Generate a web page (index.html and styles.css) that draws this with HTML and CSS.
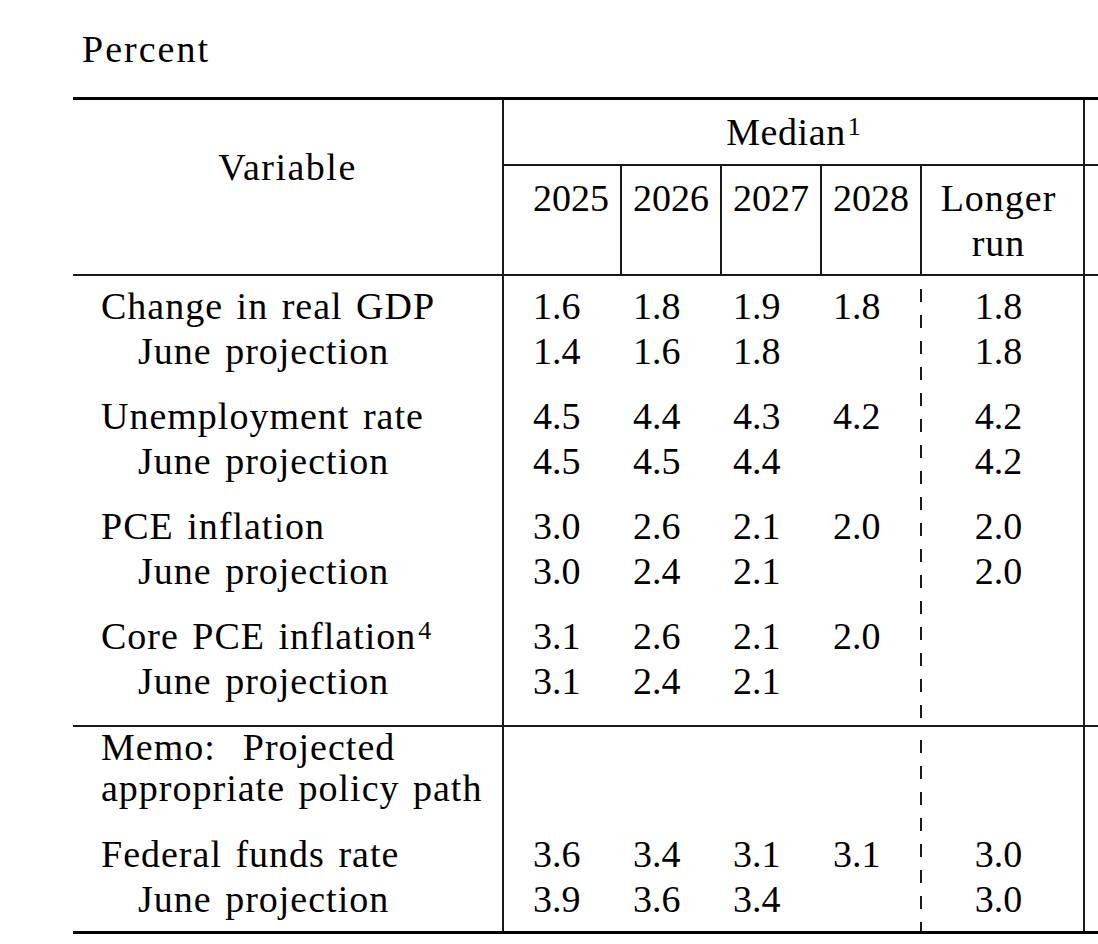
FILE: index.html
```html
<!DOCTYPE html>
<html>
<head>
<meta charset="utf-8">
<title>Economic projections</title>
<link rel="stylesheet" href="styles.css">
</head>
<body>
<div class="page">
  <div class="caption">Percent</div>
  <div class="table">
    <div class="thead">
      <div class="th-var">Variable</div>
      <div class="th-group">
        <div class="th-title">Median<sup>1</sup></div>
        <div class="th-years">
          <div class="yr first">2025</div>
          <div class="yr">2026</div>
          <div class="yr">2027</div>
          <div class="yr">2028</div>
          <div class="yr lr txt">Longer<br>run</div>
        </div>
      </div>
      <div class="th-next">
        <div class="th-title">&nbsp;</div>
      </div>
    </div>

    <div class="tsec">
      <div class="row top"><div class="lab">Change in real GDP</div><div class="v first">1.6</div><div class="v">1.8</div><div class="v">1.9</div><div class="v">1.8</div><div class="v lr">1.8</div><div class="v rest"></div></div>
      <div class="row"><div class="lab sub">June projection</div><div class="v first">1.4</div><div class="v">1.6</div><div class="v">1.8</div><div class="v"></div><div class="v lr">1.8</div><div class="v rest"></div></div>
      <div class="row gap"><div class="lab">Unemployment rate</div><div class="v first">4.5</div><div class="v">4.4</div><div class="v">4.3</div><div class="v">4.2</div><div class="v lr">4.2</div><div class="v rest"></div></div>
      <div class="row"><div class="lab sub">June projection</div><div class="v first">4.5</div><div class="v">4.5</div><div class="v">4.4</div><div class="v"></div><div class="v lr">4.2</div><div class="v rest"></div></div>
      <div class="row gap"><div class="lab">PCE inflation</div><div class="v first">3.0</div><div class="v">2.6</div><div class="v">2.1</div><div class="v">2.0</div><div class="v lr">2.0</div><div class="v rest"></div></div>
      <div class="row"><div class="lab sub">June projection</div><div class="v first">3.0</div><div class="v">2.4</div><div class="v">2.1</div><div class="v"></div><div class="v lr">2.0</div><div class="v rest"></div></div>
      <div class="row gap"><div class="lab">Core PCE inflation<sup>4</sup></div><div class="v first">3.1</div><div class="v">2.6</div><div class="v">2.1</div><div class="v">2.0</div><div class="v lr"></div><div class="v rest"></div></div>
      <div class="row end"><div class="lab sub">June projection</div><div class="v first">3.1</div><div class="v">2.4</div><div class="v">2.1</div><div class="v"></div><div class="v lr"></div><div class="v rest"></div></div>
    </div>

    <div class="tsec">
      <div class="row memo"><div class="lab">Memo:&nbsp; Projected<br>appropriate policy path</div><div class="v first"></div><div class="v"></div><div class="v"></div><div class="v"></div><div class="v lr"></div><div class="v rest"></div></div>
      <div class="row ff"><div class="lab">Federal funds rate</div><div class="v first">3.6</div><div class="v">3.4</div><div class="v">3.1</div><div class="v">3.1</div><div class="v lr">3.0</div><div class="v rest"></div></div>
      <div class="row last"><div class="lab sub">June projection</div><div class="v first">3.9</div><div class="v">3.6</div><div class="v">3.4</div><div class="v"></div><div class="v lr">3.0</div><div class="v rest"></div></div>
    </div>
  </div>
</div>
</body>
</html>
```

FILE: styles.css
```css
html, body {
  margin: 0;
  padding: 0;
  background: #fff;
  overflow: hidden;
}

.page {
  font-family: "Liberation Serif", "Times New Roman", serif;
  font-size: 38px;
  color: #000;
  padding: 27px 0 0 73px;
  width: 1600px;
}

.caption {
  line-height: 45px;
  padding-left: 9px;
  letter-spacing: 2px;
  margin-bottom: 25px;
}

.txt {
  letter-spacing: 1px;
}

sup {
  font-size: 26px;
  line-height: 0;
  vertical-align: 10px;
  letter-spacing: 0;
  margin-left: 2px;
}

.table {
  width: 1500px;
  border-top: 3px solid #000;
  border-bottom: 3px solid #000;
}

/* header */
.thead {
  display: flex;
  border-bottom: 2px solid #1a1a1a;
}

.th-var {
  width: 431px;
  flex: none;
  box-sizing: border-box;
  border-right: 2px solid #1a1a1a;
  padding-top: 45px;
  line-height: 45px;
  text-align: center;
  letter-spacing: 1.5px;
}

.th-group {
  width: 581px;
  flex: none;
  box-sizing: border-box;
  border-right: 2px solid #1a1a1a;
}

.th-next {
  flex: 1;
}

.th-title {
  border-bottom: 2px solid #1a1a1a;
  padding: 10px 0 9px;
  line-height: 45px;
  text-align: center;
  letter-spacing: 0.6px;
}

.th-years {
  display: flex;
}

.yr {
  width: 100px;
  flex: none;
  box-sizing: border-box;
  border-right: 2px solid #1a1a1a;
  padding: 10px 0 8px;
  line-height: 45px;
  text-align: center;
}

.yr.first {
  width: 118px;
  padding-left: 18px;
}

.yr.lr {
  width: 161px;
  border-right: none;
  padding-right: 8px;
}

/* body */
.tsec {
  background-image: linear-gradient(to bottom, transparent 13px, #1a1a1a 13px);
  background-size: 2px 26px;
  background-repeat: repeat-y;
  background-position: 847px 0;
}

.tsec + .tsec {
  border-top: 2px solid #1a1a1a;
}

.row {
  display: flex;
  line-height: 45px;
}

.row > div {
  flex: none;
  box-sizing: border-box;
}

.lab {
  width: 431px;
  border-right: 2px solid #1a1a1a;
  padding-left: 28px;
  letter-spacing: 1px;
  word-spacing: 3px;
  white-space: nowrap;
}

.lab.sub {
  padding-left: 65px;
}

.v {
  width: 100px;
  padding-left: 11px;
}

.v.first {
  width: 118px;
  padding-left: 29px;
}

.v.lr {
  width: 163px;
  padding-left: 0;
  padding-right: 8px;
  border-right: 2px solid #1a1a1a;
  text-align: center;
}

.row > .v.rest {
  flex: 1;
}

.row.top > div {
  padding-top: 8px;
}

.row.gap > div {
  padding-top: 20px;
}

.row.end > div {
  padding-bottom: 21px;
}

.row.memo > div {
  line-height: 41px;
}

.row.ff > div {
  padding-top: 23px;
}

.row.last > div {
  padding-bottom: 9px;
}
```
